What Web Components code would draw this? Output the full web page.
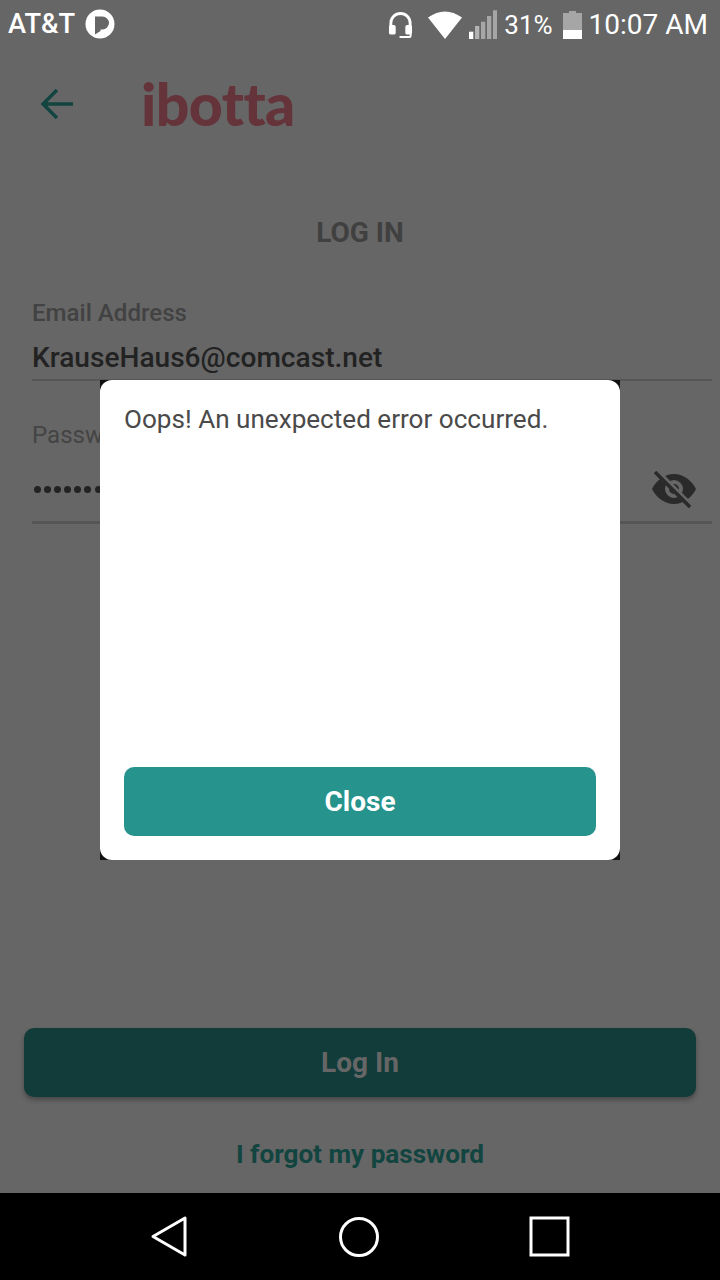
<!DOCTYPE html>
<html><head><meta charset="utf-8"><title>Log in</title>
<style>
html,body{margin:0;padding:0;background:#666;}
body{width:720px;height:1280px;overflow:hidden;font-family:Roboto,"Liberation Sans",sans-serif;}
</style></head><body>
<app-screen>
  <status-bar></status-bar>
  <login-page></login-page>
  <nav-bar></nav-bar>
  <error-dialog>Oops! An unexpected error occurred.</error-dialog>
</app-screen>
<script>
function def(name, html){
  customElements.define(name, class extends HTMLElement{
    constructor(){super();this.attachShadow({mode:'open'}).innerHTML=html;}
  });
}
def('app-screen',`<style>:host{display:flex;flex-direction:column;position:relative;width:720px;height:1280px;background:#666;overflow:hidden}</style><slot></slot>`);

def('status-bar',`<style>
:host{display:flex;align-items:center;height:48px;flex:none;padding:0 12px 0 8px;box-sizing:border-box;color:#fff;font-size:28px}
.c{font-weight:500;font-size:27.300px;line-height:48px}
svg{display:block;flex:none}
.l{display:flex;align-items:center;gap:10px}
.r{margin-left:auto;display:flex;align-items:center;padding-top:1px}
.pct{margin-left:7px;font-size:26px}
.time{margin-left:7px}
</style>
<div class="l"><span class="c">AT&amp;T</span>
<svg width="30" height="30" viewBox="0 0 30 30"><circle cx="15" cy="15" r="14.500" fill="#fff"/><path d="M10 7.500h7.500a6.500 6.500 0 0 1 0 13H15.500v1.500l-5.500 3.500z" fill="#666"/></svg></div>
<div class="r">
<svg width="25" height="28" viewBox="0 0 26 28" style="margin-right:15px"><path d="M3 18V12a10 10 0 0 1 20 0v6" fill="none" stroke="#fff" stroke-width="3"/><rect x="1" y="14" width="7" height="10" rx="2" fill="#fff"/><rect x="18" y="14" width="7" height="10" rx="2" fill="#fff"/><path d="M23.500 23v2.500a1 1 0 0 1-1 1H12" fill="none" stroke="#fff" stroke-width="2"/></svg>
<svg width="34" height="28" viewBox="0 0 34 28" style="margin-right:7px"><path d="M0 6.500Q17-5.500 34 6.500L17 28z" fill="#fff"/></svg>
<svg width="28.300" height="29" viewBox="0 0 28.300 29"><rect x="0" y="21.700" width="4.300" height="7.300" fill="#fff"/><rect x="6" y="16" width="4.300" height="13" fill="#b3b3b3"/><rect x="12" y="11.700" width="4.300" height="17.300" fill="#a6a6a6"/><rect x="18" y="6" width="4.300" height="23" fill="#a6a6a6"/><rect x="24" y="0.300" width="4.300" height="28.700" fill="#a6a6a6"/></svg>
<span class="pct">31%</span>
<svg width="19" height="28" viewBox="0 0 19 28" style="margin-left:10px"><path d="M6 0h7v2h6v26H0V2h6z" fill="#a6a6a6"/><rect y="19" width="19" height="9" fill="#fff"/></svg>
<span class="time">10:07 AM</span>
</div>`);

def('login-page',`<style>
:host{display:flex;flex-direction:column;flex:1;min-height:0;box-sizing:border-box}
header{display:flex;align-items:center;height:112px;flex:none;padding-left:40px;box-sizing:border-box}
.logo{font-family:Lato,sans-serif;font-weight:900;font-size:59px;color:#65333a;margin-left:67px;letter-spacing:-.6px;line-height:60px;padding-bottom:1px}
h1{margin:0;font-size:28px;font-weight:700;color:#404040;text-align:center;line-height:32px;margin-top:57px}
form{display:flex;flex-direction:column;padding:0 8px 0 32px;margin-top:50px}
.lab{font-size:24.100px;font-weight:500;color:#424242;line-height:28px;height:28px}
.val{font-size:28.100px;font-weight:500;color:#222;line-height:32px;margin-top:15px;padding-bottom:5px;border-bottom:2px solid #565656}
.lab2{margin-top:40px;color:#444;font-weight:400}
.pw{display:flex;align-items:center;justify-content:space-between;border-bottom:3px solid #565656;padding:4px 16px 0 0;margin-top:5px;height:63px}
.dots{display:flex;gap:3.100px;margin-left:2px}
.dots i{width:7px;height:7px;border-radius:50%;background:#222;display:block}
.foot{margin-top:auto;display:flex;flex-direction:column;align-items:center;padding:0 24px}
.btn{display:flex;align-items:center;justify-content:center;width:100%;height:69px;background:#123c3a;border-radius:10px;color:#666;font-size:28px;font-weight:700;box-shadow:0 3px 5px rgba(0,0,0,.3)}
.forgot{font-size:26.100px;font-weight:700;color:#124440;line-height:32px;margin-top:41px;margin-bottom:23px}
</style>
<header>
<svg width="34" height="32" viewBox="0 0 34 32"><path d="M33 16H4M17 2 3 16l14 14" fill="none" stroke="#124440" stroke-width="3.400"/></svg>
<span class="logo">ibotta</span>
</header>
<h1>LOG IN</h1>
<form>
<div class="lab">Email Address</div>
<div class="val">KrauseHaus6@comcast.net</div>
<div class="lab lab2">Password</div>
<div class="pw"><div class="dots"><i></i><i></i><i></i><i></i><i></i><i></i><i></i><i></i></div>
<svg width="44" height="38" viewBox="0 0 44 38"><path fill-rule="evenodd" d="M22 3C12 3 4 10 0 18c4 8 12 15 22 15s18-7 22-15C40 10 32 3 22 3zm0 6a9 9 0 1 1 0 18 9 9 0 0 1 0-18z" fill="#2a2a2a"/><circle cx="22" cy="18" r="5" fill="#2a2a2a"/><path d="M4 0l35 35" stroke="#666" stroke-width="6"/><path d="M3 1l35 35" stroke="#2a2a2a" stroke-width="3.500"/></svg></div>
</form>
<div class="foot"><div class="btn">Log In</div><div class="forgot">I forgot my password</div></div>`);

def('nav-bar',`<style>
:host{display:flex;flex:none;height:87px;background:#000;position:relative}
svg{display:block}
</style>
<svg width="720" height="87" viewBox="0 0 720 87"><path d="M185 25v37L153 43.500z" fill="none" stroke="#fff" stroke-width="3" stroke-linejoin="round"/><circle cx="359" cy="44" r="18.500" fill="none" stroke="#fff" stroke-width="3"/><rect x="531" y="25" width="37" height="37" fill="none" stroke="#fff" stroke-width="3"/></svg>`);

def('error-dialog',`<style>
:host{position:absolute;left:100px;top:380px;width:520px;height:480px;background:#111;display:block}
.box{box-sizing:border-box;height:100%;background:#fff;border-radius:12px;padding:24px;display:flex;flex-direction:column}
.msg{font-size:26.100px;color:#4a4a4a;line-height:30px}
.btn{margin-top:auto;height:69px;border-radius:10px;background:#26938c;color:#fff;font-size:28px;font-weight:700;display:flex;align-items:center;justify-content:center}
</style>
<div class="box"><div class="msg"><slot></slot></div><div class="btn">Close</div></div>`);
</script>
</body></html>
